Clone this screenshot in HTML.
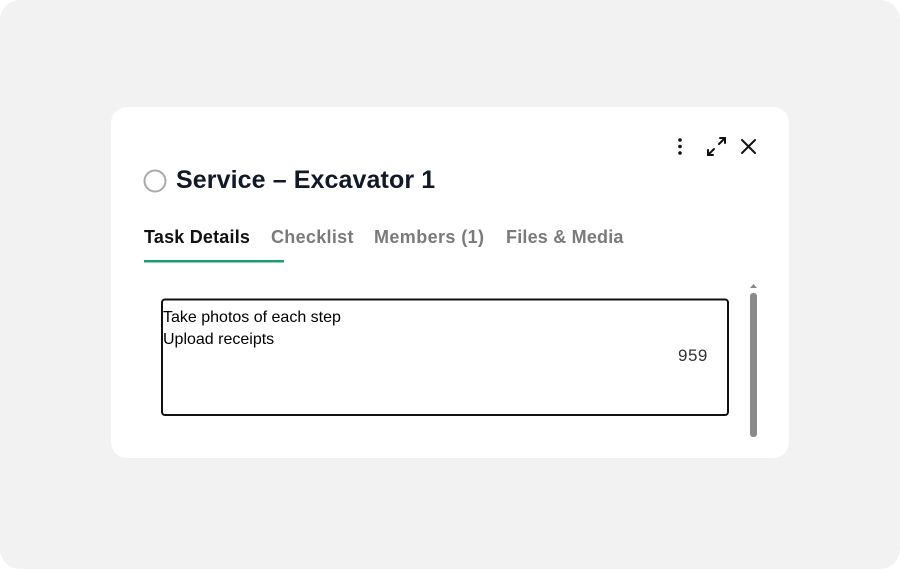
<!DOCTYPE html>
<html><head><style>
body{margin:0;width:900px;height:569px;background:#fff;font-family:"Liberation Sans",sans-serif;overflow:hidden}
.bg{position:absolute;left:0;top:0;width:900px;height:569px;background:#f2f2f2;border-radius:20px}
.card{position:absolute;left:111px;top:107px;width:678px;height:351px;background:#fff;border-radius:16px}
.t{position:absolute;white-space:nowrap}
</style></head><body>
<div class="bg"></div>
<div class="card"></div>
<svg style="position:absolute;left:0;top:0" width="900" height="569">
<circle cx="680" cy="140" r="1.8" fill="#111"/><circle cx="680" cy="146.5" r="1.8" fill="#111"/><circle cx="680" cy="153" r="1.8" fill="#111"/>
<g stroke="#111" stroke-width="2" fill="none" stroke-linecap="round">
<path d="M719 144L725 138M720 138H725V143M714 149L708 155M708 150V155H713"/>
<path d="M742 140L755 153M755 140L742 153"/>
</g>
<circle cx="155" cy="181" r="10.5" fill="none" stroke="#aaa" stroke-width="2"/>
<rect x="144" y="260" width="140" height="2.5" fill="#1a9e6e"/>
<rect x="162" y="299.5" width="566" height="115.5" rx="3" fill="none" stroke="#111" stroke-width="2"/>
<path d="M750 288L753.5 284L757 288Z" fill="#888"/>
<rect x="750" y="293" width="7" height="144" rx="3" fill="#8a8a8a"/>
</svg>
<div class="t" style="left:176px;top:166px;font-size:25px;font-weight:bold;color:#111827;letter-spacing:0.1px">Service – Excavator 1</div>
<div class="t" style="left:144px;top:227px;font-size:18px;font-weight:bold;color:#111;letter-spacing:0.2px">Task Details</div>
<div class="t" style="left:271px;top:227px;font-size:18px;font-weight:bold;color:#7a7a7a;letter-spacing:0.3px">Checklist</div>
<div class="t" style="left:374px;top:227px;font-size:18px;font-weight:bold;color:#7a7a7a;letter-spacing:0.4px">Members (1)</div>
<div class="t" style="left:506px;top:227px;font-size:18px;font-weight:bold;color:#7a7a7a;letter-spacing:0.2px">Files &amp; Media</div>
<div class="t" style="left:163px;top:307px;font-size:16px;line-height:22px;color:#000">Take photos of each step<br>Upload receipts</div>
<div class="t" style="left:678px;top:346px;font-size:17px;color:#333;letter-spacing:0.5px">959</div>
</body></html>
